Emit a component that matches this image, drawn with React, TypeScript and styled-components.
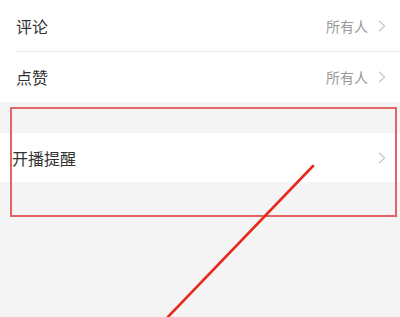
import styled, { createGlobalStyle } from "styled-components";

/* ── Global ─────────────────────────────────────────────── */

const GlobalStyle = createGlobalStyle`
  html, body {
    margin: 0;
    padding: 0;
    background: #f4f4f4;
    font-family: "Noto Sans CJK SC", "Noto Sans", sans-serif;
  }
`;

/* ── Styles ─────────────────────────────────────────────── */

const Page = styled.div`
  position: relative;
  width: 400px;
  height: 317px;
  overflow: hidden;
  background: #f4f4f4;
`;

const Group = styled.div<{ $gapTop?: number }>`
  background: #fff;
  margin-top: ${(p) => p.$gapTop ?? 0}px;
`;

const Row = styled.div<{ $h: number; $padLeft: number }>`
  display: flex;
  align-items: center;
  height: ${(p) => p.$h}px;
  padding: 0 14px 0 ${(p) => p.$padLeft}px;
  box-sizing: border-box;
`;

const Title = styled.span`
  flex: 1;
  font-size: 16px;
  color: #333;
  line-height: 1;
`;

const Value = styled.span`
  font-size: 14px;
  color: #999;
  margin-right: 10px;
  line-height: 1;
`;

const Divider = styled.div`
  height: 1px;
  margin-left: 16px;
  background: #e8e8e8;
`;

const Chevron = styled.svg`
  width: 8px;
  height: 12px;
  display: block;
`;

/* annotations drawn over the screenshot */
const Highlight = styled.div`
  position: absolute;
  left: 10px;
  top: 107px;
  width: 387px;
  height: 110px;
  box-sizing: border-box;
  border: 2px solid #e36464;
  pointer-events: none;
`;

const Arrow = styled.svg`
  position: absolute;
  inset: 0;
  width: 400px;
  height: 317px;
  pointer-events: none;
`;

/* ── Component ───────────────────────────────────────────── */

function Arrowhead() {
  return (
    <Chevron viewBox="0 0 8 12">
      <path
        d="M1 0.8 L6.6 6 L1 11.2"
        fill="none"
        stroke="#c6c6c6"
        strokeWidth="1.2"
      />
    </Chevron>
  );
}

export default function App() {
  return (
    <>
      <GlobalStyle />
      <Page>
        <Group>
          <Row $h={51} $padLeft={16}>
            <Title>评论</Title>
            <Value>所有人</Value>
            <Arrowhead />
          </Row>
          <Divider />
          <Row $h={50} $padLeft={16}>
            <Title>点赞</Title>
            <Value>所有人</Value>
            <Arrowhead />
          </Row>
        </Group>

        <Group $gapTop={31}>
          <Row $h={49} $padLeft={12}>
            <Title>开播提醒</Title>
            <Arrowhead />
          </Row>
        </Group>

        <Highlight />
        <Arrow viewBox="0 0 400 317">
          <line
            x1="313"
            y1="166"
            x2="165"
            y2="320"
            stroke="#e8291c"
            strokeWidth="2.6"
            strokeLinecap="round"
          />
        </Arrow>
      </Page>
    </>
  );
}
